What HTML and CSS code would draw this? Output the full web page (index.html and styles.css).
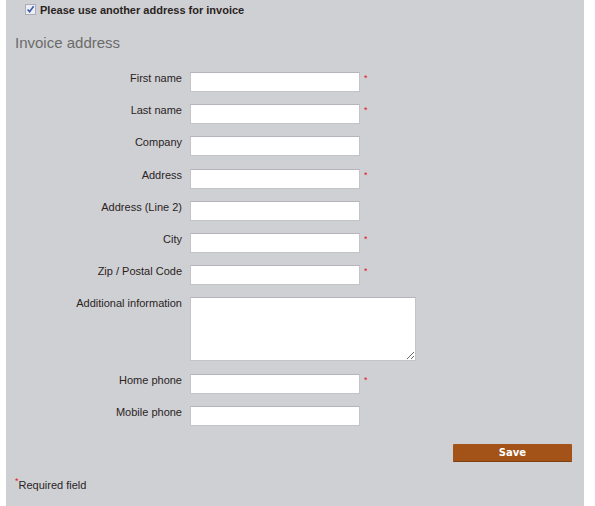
FILE: index.html
```html
<!DOCTYPE html>
<html lang="en">
<head>
  <meta charset="UTF-8">
  <meta name="viewport" content="width=device-width, initial-scale=1">
  <title>Invoice address</title>
  <link rel="stylesheet" href="styles.css">
</head>
<body>

  <div class="panel">
    <label class="invoice-toggle">
      <span class="check-box">
        <svg width="11" height="11" viewBox="0 0 11 11">
          <rect x="0.5" y="0.5" width="10" height="10" fill="#eceef3" stroke="#a9adb6"/>
          <path d="M2.6 5.4 L4.6 7.8 L8.6 2.2" fill="none" stroke="#3a56b0" stroke-width="1.5"/>
        </svg>
      </span>
      Please use another address for invoice
    </label>

    <h2>Invoice address</h2>

    <form class="address-form" onsubmit="return false;">
      <div class="row">
        <label for="firstName">First name</label>
        <input type="text" id="firstName">
        <span class="req">*</span>
      </div>
      <div class="row">
        <label for="lastName">Last name</label>
        <input type="text" id="lastName">
        <span class="req">*</span>
      </div>
      <div class="row">
        <label for="company">Company</label>
        <input type="text" id="company">
      </div>
      <div class="row">
        <label for="address">Address</label>
        <input type="text" id="address">
        <span class="req">*</span>
      </div>
      <div class="row">
        <label for="address2">Address (Line 2)</label>
        <input type="text" id="address2">
      </div>
      <div class="row">
        <label for="city">City</label>
        <input type="text" id="city">
        <span class="req">*</span>
      </div>
      <div class="row">
        <label for="zip">Zip / Postal Code</label>
        <input type="text" id="zip">
        <span class="req">*</span>
      </div>
      <div class="row">
        <label for="info">Additional information</label>
        <textarea id="info"></textarea>
      </div>
      <div class="row">
        <label for="homePhone">Home phone</label>
        <input type="text" id="homePhone">
        <span class="req">*</span>
      </div>
      <div class="row">
        <label for="mobilePhone">Mobile phone</label>
        <input type="text" id="mobilePhone">
      </div>

      <div class="button-row">
        <button type="submit">Save</button>
      </div>
    </form>

    <p class="required-note"><span class="req">*</span>Required field</p>
  </div>

</body>
</html>
```

FILE: styles.css
```css
body {
  margin: 0;
  background: #fff;
}
.panel {
  width: 578px;
  min-height: 506px;
  margin-left: 6px;
  background: #cfd0d4;
  box-sizing: border-box;
  padding-top: 1px;
  font-family: "Liberation Sans", Arial, sans-serif;
  font-size: 11px;
  color: #2a241e;
}
.invoice-toggle {
  display: flex;
  align-items: center;
  height: 17px;
  padding-left: 19px;
  font-weight: bold;
}
.check-box {
  display: inline-flex;
  margin-right: 4px;
}
h2 {
  margin: 16px 0 0 9px;
  font-size: 15px;
  line-height: 18px;
  font-weight: normal;
  color: #6b6b6b;
}
.address-form {
  margin-top: 20px;
}
.row {
  display: flex;
  align-items: flex-start;
  margin-bottom: 12.2px;
}
.row label {
  width: 176px;
  margin-right: 8px;
  text-align: right;
  line-height: 13px;
}
.row input,
.row textarea {
  width: 170px;
  height: 20px;
  margin: 0;
  padding: 2px 3px;
  box-sizing: border-box;
  border: 1px solid #c3c4c8;
  border-top-color: #b4b5ba;
  background: #fff;
  font-family: inherit;
  font-size: 11px;
}
.row textarea {
  width: 226px;
  height: 64px;
  resize: both;
}
.req {
  color: #e8102a;
  font-size: 9px;
  line-height: 9px;
}
.row .req {
  margin-left: 4px;
  padding-top: 2px;
}
.button-row {
  display: flex;
  justify-content: flex-end;
  padding-right: 12px;
  margin-top: 18px;
}
.button-row button {
  width: 119px;
  height: 18px;
  padding: 0;
  border: none;
  border-bottom: 1px solid #7d3f12;
  border-radius: 1px;
  background: #a35317;
  color: #fff;
  font-family: "DejaVu Sans", Verdana, sans-serif;
  font-size: 10px;
  font-weight: bold;
  cursor: pointer;
}
.required-note {
  margin: 15px 0 0 9px;
  line-height: 13px;
}
.required-note .req {
  vertical-align: 5px;
}
```
